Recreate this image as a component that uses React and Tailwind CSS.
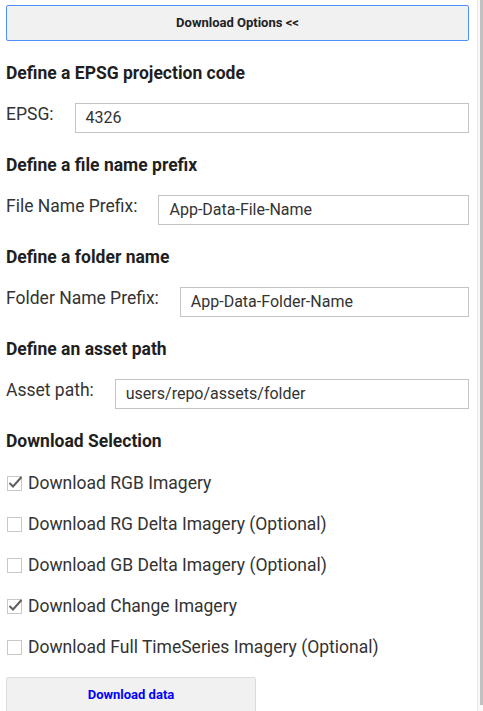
import React from 'react';

function Heading({ children }) {
  return (
    <div className="mt-[21px] text-[17.5px] font-bold leading-[22px] text-[#1f1f1f] whitespace-nowrap">{children}</div>
  );
}

function TextRow({ label, value }) {
  return (
    <div className="mt-[19px] flex items-start">
      <div className="text-[17.5px] leading-[22px] text-[#333] whitespace-nowrap">{label}</div>
      <div className="ml-[21px] flex-1 h-[30px] border border-[#c4c4c4] bg-white flex items-center pl-[10px] text-[16px] text-[#333] whitespace-nowrap">
        {value}
      </div>
    </div>
  );
}

function Check({ checked, label }) {
  return (
    <div className="flex items-center h-[22px]">
      <div className="relative ml-[1px] w-[15px] h-[15px] border border-[#c8c8c8] bg-white">
        {checked && (
          <svg width="16" height="16" viewBox="0 0 16 16" className="absolute -left-[1px] -top-[3px]">
            <path d="M2.5 9 L6 12.5 L14.5 3" fill="none" stroke="#5f5f5f" strokeWidth="2" />
          </svg>
        )}
      </div>
      <div className="ml-[6px] text-[17.5px] leading-[22px] text-[#333] whitespace-nowrap">{label}</div>
    </div>
  );
}

export default function App() {
  return (
    <div className="flex h-[711px] overflow-hidden bg-white" style={{ fontFamily: 'Roboto, "Liberation Sans", sans-serif' }}>
      <div className="w-[477px] pl-[6px] pr-[8px] pt-[5px] flex flex-col">
        <button className="h-[36px] w-full shrink-0 rounded-[2px] border border-[#4d90fe] bg-[#f1f1f1] text-[13px] font-bold text-[#222]">
          Download Options &lt;&lt;
        </button>

        <Heading>Define a EPSG projection code</Heading>
        <TextRow label="EPSG:" value="4326" />

        <Heading>Define a file name prefix</Heading>
        <TextRow label="File Name Prefix:" value="App-Data-File-Name" />

        <Heading>Define a folder name</Heading>
        <TextRow label="Folder Name Prefix:" value="App-Data-Folder-Name" />

        <Heading>Define an asset path</Heading>
        <TextRow label="Asset path:" value="users/repo/assets/folder" />

        <Heading>Download Selection</Heading>
        <div className="mt-[20px] flex flex-col gap-[19px]">
          <Check checked label="Download RGB Imagery" />
          <Check label="Download RG Delta Imagery (Optional)" />
          <Check label="Download GB Delta Imagery (Optional)" />
          <Check checked label="Download Change Imagery" />
          <Check label="Download Full TimeSeries Imagery (Optional)" />
        </div>

        <button className="mt-[19px] w-[250px] h-[36px] shrink-0 rounded-[2px] border border-[#dcdcdc] bg-[#f1f1f1] text-[13px] font-bold text-[#0000ff]">
          Download data
        </button>
      </div>
      <div className="flex-1 flex justify-end bg-[#fafafa] border-l border-[#ececec]">
        <div className="w-[3px] h-[705px] bg-[#c1c1c1]" />
      </div>
    </div>
  );
}
